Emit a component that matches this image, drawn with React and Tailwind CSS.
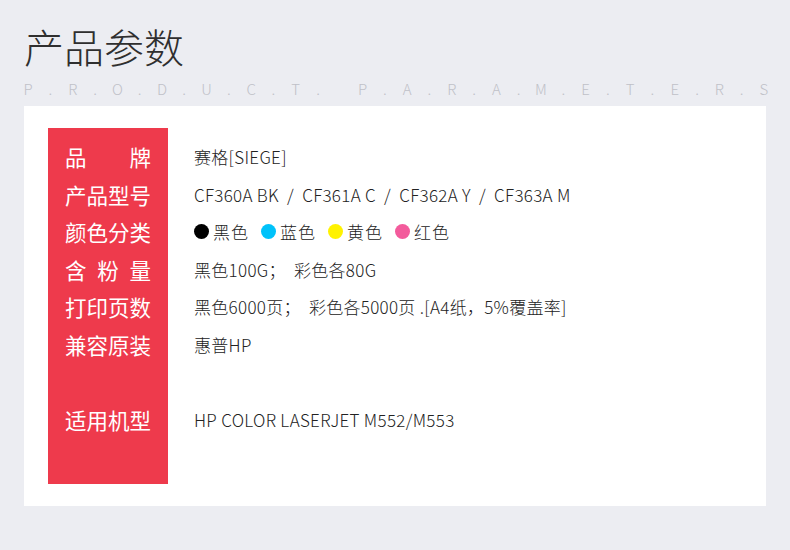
const subtitle = 'P.R.O.D.U.C.T. P.A.R.A.M.E.T.E.R.S'.split('');

const rows = [
  { label: ['品', '牌'], value: '赛格[SIEGE]' },
  { label: ['产', '品', '型', '号'], value: 'CF360A BK  /  CF361A C  /  CF362A Y  /  CF363A M' },
  { label: ['颜', '色', '分', '类'], colors: true },
  { label: ['含', '粉', '量'], value: '黑色100G；  彩色各80G' },
  { label: ['打', '印', '页', '数'], value: '黑色6000页；  彩色各5000页 .[A4纸，5%覆盖率]' },
  { label: ['兼', '容', '原', '装'], value: '惠普HP' },
  { label: [], value: '' },
  { label: ['适', '用', '机', '型'], value: 'HP COLOR LASERJET M552/M553' },
];

const swatches = [
  { color: 'bg-black', name: '黑色' },
  { color: 'bg-[#00c2fa]', name: '蓝色' },
  { color: 'bg-[#fff200]', name: '黄色' },
  { color: 'bg-[#f35b9c]', name: '红色' },
];

const App = () => {
  return (
    <div className="w-[790px] h-[550px] bg-[#ecedf2] font-['Noto_Sans_CJK_SC','Noto_Sans',sans-serif] overflow-hidden">
      {/* Header */}
      <div className="px-[24px] pt-[23px]">
        <h1 className="text-[40px] leading-[46px] font-light text-[#2f2f2f]">产品参数</h1>
        <div className="flex mt-[10px] ml-[-7px] text-[15px] leading-[20px] font-light text-[#c0c1c8]">
          {subtitle.map((ch, i) => (
            <span key={i} className="w-[22.3px] text-center shrink-0">
              {ch === ' ' ? '\u00a0' : ch}
            </span>
          ))}
        </div>
      </div>

      {/* Card */}
      <div className="mx-[24px] mt-[7px] h-[400px] bg-white px-[24px] py-[22px] flex">
        <div className="w-[120px] h-[356px] bg-[#ee3a4c] pt-[10px] px-[17px] shrink-0">
          {rows.map((row, i) => (
            <div
              key={i}
              className="h-[37.5px] flex items-center justify-between text-white text-[21.5px] leading-none"
            >
              {row.label.map((c, j) => (
                <span key={j}>{c}</span>
              ))}
            </div>
          ))}
        </div>
        <div className="pl-[26px] pt-[10px] text-[#222] text-[17px] font-light tracking-[0.3px]">
          {rows.map((row, i) => (
            <div key={i} className="h-[37.5px] flex items-center whitespace-pre">
              {row.colors ? (
                <div className="flex items-center">
                  {swatches.map((s) => (
                    <div key={s.name} className="flex items-center mr-[12px]">
                      <span className={`w-[15px] h-[15px] rounded-full ${s.color} mr-[4px]`} />
                      <span className="tracking-[1px]">{s.name}</span>
                    </div>
                  ))}
                </div>
              ) : (
                row.value
              )}
            </div>
          ))}
        </div>
      </div>
    </div>
  );
};

export default App;
